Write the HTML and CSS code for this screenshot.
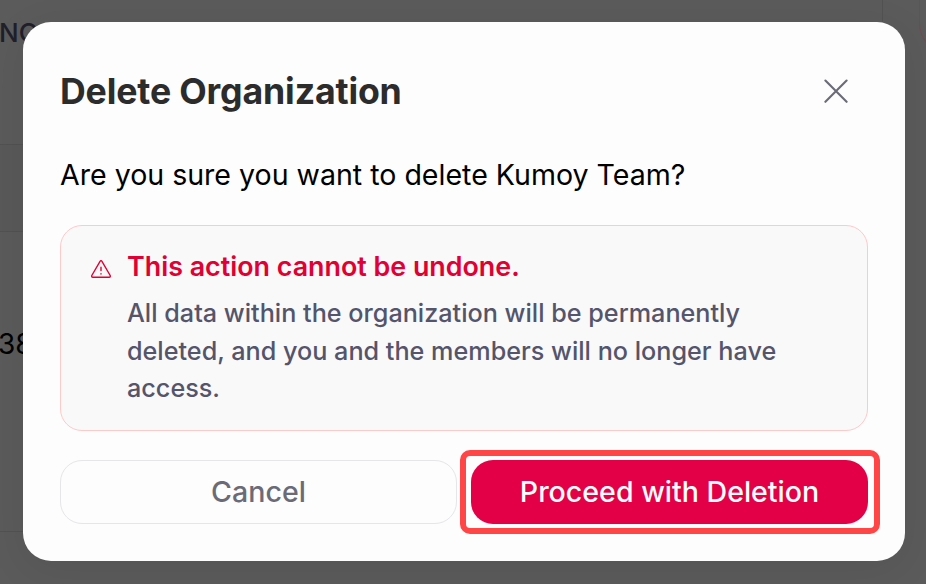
FILE: index.html
```
<!DOCTYPE html>
<html lang="en">
<head>
  <meta charset="UTF-8" />
  <title>Delete Organization</title>
  <meta name="viewport" content="width=device-width, initial-scale=1.0" />
  <link rel="stylesheet" href="styles.css">
</head>
<body>
  <div class="page">
    <div class="plan">
      <div class="plan-row plan-head">NO</div>
      <div class="plan-row plan-band"></div>
      <div class="plan-row plan-value">38</div>
    </div>
    <div class="side-card"></div>
  </div>

  <div class="overlay">
    <div class="modal" role="dialog" aria-modal="true">
      <div class="modal-header">
        <h1>Delete Organization</h1>
        <button class="close" aria-label="Close">
          <svg width="24" height="24" viewBox="0 0 24 24" fill="none" stroke="currentColor" stroke-width="2.1" stroke-linecap="round">
            <path d="M1.4 1.6L22.6 22.8M22.6 1.6L1.4 22.8" />
          </svg>
        </button>
      </div>
      <p class="question">Are you sure you want to delete Kumoy Team?</p>
      <div class="alert">
        <svg class="alert-icon" width="20" height="18" viewBox="0 0 20 18" fill="none" stroke="currentColor" stroke-width="1.4" stroke-linecap="round" stroke-linejoin="round">
          <path d="M9.2 1.1Q10 .2 10.8 1.1L19.2 15.5Q19.6 17.2 18.2 17.2H1.8Q.4 17.2 .8 15.5Z" />
          <path d="M10 7.3V10.6M10 13.6V14" />
        </svg>
        <div>
          <h2>This action cannot be undone.</h2>
          <p>All data within the organization will be permanently deleted, and you and the members will no longer have access.</p>
        </div>
      </div>
      <div class="actions">
        <button class="btn">Cancel</button>
        <div class="highlight">
          <button class="btn btn-danger">Proceed with Deletion</button>
        </div>
      </div>
    </div>
  </div>
</body>
</html>
```
FILE: styles.css
```
* {
  box-sizing: border-box;
}
body {
  margin: 0;
  height: 584px;
  overflow: hidden;
  background: #5b5b5b;
  font-family: Inter, sans-serif;
}
h1, h2, p {
  margin: 0;
}
button {
  font-family: inherit;
  cursor: pointer;
}

/* dimmed page */
.page {
  display: flex;
  height: 584px;
  overflow: hidden;
}
.plan {
  width: 883px;
  height: 532px;
  flex-shrink: 0;
  border-right: 1px solid #525252;
}
.plan-row {
  border-bottom: 1px solid #525252;
}
.plan-head {
  height: 145px;
  padding-top: 17px;
  font-size: 26px;
  font-weight: 500;
  line-height: 32px;
  text-indent: -1px;
  color: #20202a;
}
.plan-band {
  height: 87px;
  background: #595959;
}
.plan-value {
  height: 300px;
  padding-top: 95px;
  font-size: 28px;
  line-height: 34px;
  text-indent: -2px;
  color: #000;
}
.side-card {
  width: 60px;
  height: 52px;
  margin-left: 36px;
  flex-shrink: 0;
  border: 1px solid #704c4f;
  border-top: none;
  border-radius: 0 0 0 28px;
}

/* modal */
.overlay {
  position: absolute;
  inset: 0;
  padding: 22px 21px 0 23px;
}
.modal {
  height: 539px;
  padding: 46px 37px 0 37px;
  background: #fdfdfd;
  border-radius: 28px;
  box-shadow: 0 8px 40px rgba(0, 0, 0, 0.08);
}
.modal-header {
  display: flex;
  justify-content: space-between;
  align-items: center;
  height: 46px;
  padding-right: 20px;
}
h1 {
  font-size: 35.7px;
  font-weight: 700;
  line-height: 46px;
  letter-spacing: -0.16px;
  color: #2c2c2c;
}
.close {
  display: flex;
  padding: 0;
  border: none;
  background: none;
  color: #6b6b78;
}
.question {
  margin-top: 42px;
  font-size: 28.55px;
  line-height: 38px;
  color: #000;
}
.alert {
  display: flex;
  gap: 16px;
  height: 206px;
  margin-top: 31px;
  padding: 22px 40px 0 30px;
  background: #f9f9f9;
  border: 1px solid #ffc9c9;
  border-radius: 22px;
}
.alert-icon {
  flex-shrink: 0;
  margin-top: 12px;
  color: #e00034;
}
.alert h2 {
  font-size: 26.85px;
  font-weight: 600;
  line-height: 36px;
  color: #e00034;
}
.alert p {
  margin-top: 11px;
  font-size: 25.2px;
  font-weight: 500;
  line-height: 37.5px;
  color: #54546b;
}
.actions {
  display: flex;
  align-items: center;
  gap: 3px;
  height: 84px;
  margin: 19px -12px 0 0;
}
.btn {
  width: 397px;
  height: 64px;
  padding: 0 0 2px;
  border: 1px solid #e6e6e9;
  border-radius: 22px;
  background: #fdfdfd;
  font-size: 28.55px;
  font-weight: 500;
  color: #6b6b78;
}
.btn-danger {
  border: none;
  background: #e40046;
  color: #fdfdfd;
}
.highlight {
  display: flex;
  align-items: center;
  width: 420px;
  height: 84px;
  padding-left: 5px;
  border: 6px solid #ff4545;
  border-radius: 10px;
}
```
